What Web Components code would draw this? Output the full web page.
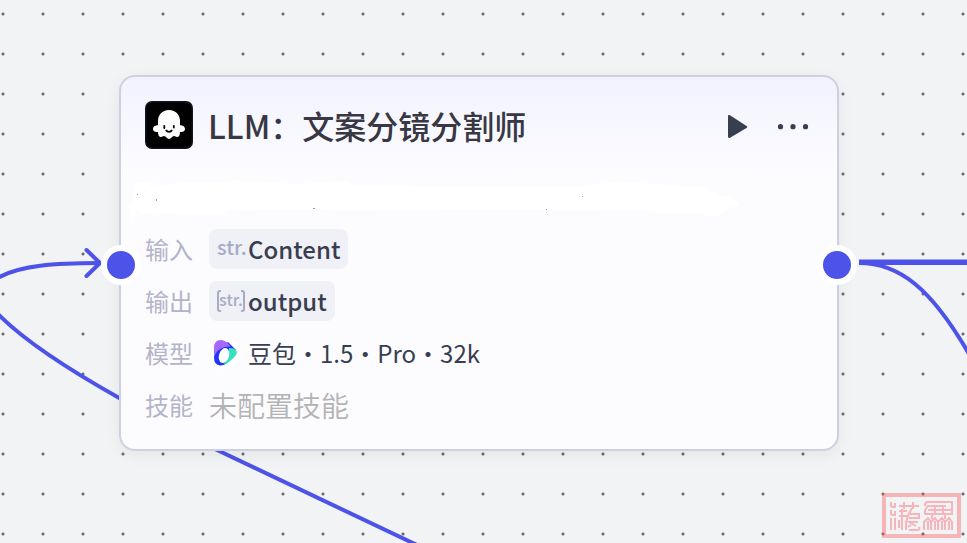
<!DOCTYPE html>
<html lang="zh-CN">
<head>
<meta charset="utf-8">
<title>LLM：文案分镜分割师</title>
<style>
  html, body {
    height: 100%;
    margin: 0;
  }
  body {
    font-family: "Noto Sans CJK SC", sans-serif;
    overflow: hidden;
  }
</style>
</head>
<body>
<flow-canvas>
  <flow-edges></flow-edges>
  <flow-node>
    <node-header slot="header">LLM：文案分镜分割师</node-header>
    <node-description slot="description"></node-description>
    <node-row label="输入"><variable-chip type="str.">Content</variable-chip></node-row>
    <node-row label="输出"><variable-chip type="str." list>output</variable-chip></node-row>
    <node-row label="模型"><model-name>豆包・1.5・Pro・32k</model-name></node-row>
    <node-row label="技能"><empty-value>未配置技能</empty-value></node-row>
  </flow-node>
  <seal-mark></seal-mark>
</flow-canvas>

<script>
"use strict";

function define(name, html) {
  window.customElements.define(name, class extends HTMLElement {
    constructor() {
      super();
      this.attachShadow({mode: 'open'}).innerHTML = html;
    }
  });
}

define('flow-canvas', `
  <style>
    :host {
      display: block;
      position: relative;
      min-height: 100%;
      overflow: hidden;
      background-color: #f1f3f5;
      background-image: radial-gradient(circle at 20px 20px, #6e6e6e 1px, transparent 2px);
      background-size: 40px 40px;
      background-position: -17px -6px;
    }
  </style>
  <slot></slot>
`);

define('flow-edges', `
  <style>
    svg {
      position: absolute;
      top: 0;
      fill: none;
      stroke: #4d53e8;
      stroke-width: 4;
      overflow: visible;
    }
    .in { left: 0; }
    .out { right: 0; }
  </style>
  <svg class="in" width="440" height="560" aria-hidden="true">
    <path d="M-4 279C18 265 58 263 99 263"/>
    <path d="M86.500 250L100 263L86.500 276" stroke-linecap="round" stroke-linejoin="round"/>
    <path d="M-3 313C24 341 71 371 121 399M215 449L417 545"/>
  </svg>
  <svg class="out" width="128" height="560" aria-hidden="true">
    <path d="M20 262.300H128" stroke-width="5.500"/>
    <path d="M20 263C60 263 92 288 130 354"/>
  </svg>
`);

define('flow-node', `
  <style>
    :host {
      display: block;
      position: absolute;
      top: 75px;
      left: 119px;
      right: 128px;
      box-sizing: border-box;
      padding: 24px;
      border: 2px solid #cdd0e0;
      border-radius: 16px;
      background: linear-gradient(#f2f2ff, #fcfcff 96px);
      box-shadow: 0 4px 16px rgba(0, 0, 0, 0.06);
    }
    .rows {
      display: flex;
      flex-direction: column;
      gap: 12px;
    }
    .port {
      position: absolute;
      top: 168px;
      box-sizing: border-box;
      width: 40px;
      height: 40px;
      border: 6px solid #fff;
      border-radius: 50%;
      background: #4d53e8;
    }
    .port--in { left: -20px; }
    .port--out { right: -20px; }
  </style>
  <slot name="header"></slot>
  <slot name="description"></slot>
  <div class="rows"><slot></slot></div>
  <div class="port port--in"></div>
  <div class="port port--out"></div>
`);

define('node-header', `
  <style>
    :host {
      display: flex;
      align-items: center;
      height: 48px;
    }
    .icon {
      width: 48px;
      height: 48px;
      margin-right: 15px;
    }
    h1 {
      flex: 1;
      margin: 0;
      font-size: 32px;
      font-weight: 500;
      line-height: 48px;
      color: #383743;
      white-space: nowrap;
    }
    button {
      display: flex;
      padding: 4px;
      border: 0;
      background: none;
      color: #383e50;
      fill: currentColor;
    }
    button + button { margin-left: 20px; }
  </style>
  <svg class="icon" viewBox="0 0 48 48" aria-hidden="true">
    <rect width="48" height="48" rx="7" fill="#101522"/>
    <rect x="1.500" y="1.500" width="45" height="45" rx="6" fill="#000"/>
    <path fill="#fff" d="M24 9c-7 0-11 5-11 11v4c-2 .5-5 1-5 4 0 2.500 2.500 3 5 3 0 3 1 5 3 5 1 0 2-1 3-1 2 0 3 3 5 3s3-3 5-3c1 0 2 1 3 1 2 0 3-2 3-5 2.500 0 5-.5 5-3 0-3-3-3.500-5-4v-4c0-6-4-11-11-11z"/>
    <path fill="none" stroke="#000" stroke-width="1.800" stroke-linecap="round" d="M19.300 25v2M28.800 25v1.500M21.300 29.500c1 1.700 4.400 1.700 5.400 0"/>
  </svg>
  <h1><slot></slot></h1>
  <button type="button" aria-label="运行">
    <svg width="24" height="28"><path d="M3 5.500C3 4 4 3.800 5 4.300L21.500 15c1 .7 1 1.500 0 2L5 26.700C4 27.200 3 27 3 25.500z"/></svg>
  </button>
  <button type="button" aria-label="更多">
    <svg width="32" height="28"><circle cx="3.500" cy="15.700" r="2.600"/><circle cx="16" cy="15.700" r="2.600"/><circle cx="28.500" cy="15.700" r="2.600"/></svg>
  </button>
`);

// description is brushed over in white, with a few specks left uncovered
define('node-description', `
  <style>
    :host { display: block; }
    svg {
      display: block;
      width: 100%;
      height: 80px;
      overflow: visible;
    }
  </style>
  <svg viewBox="0 0 668 80" preserveAspectRatio="xMinYMin slice" aria-hidden="true">
    <path fill="#fff" d="M-24 57L-13 55L-11 36L-8 34H5V37L13 36V31L15 37L37 34H75L90 31L112 33L150 35L190 33H204V36L285 37L330 38H425L445 36L470 33L512 35L535 37H557L563 43L573 44V47L588 48V51L593 53V57L584 58Q577 68 566 67L551 64Q520 67 506 62L440 61L300 60L285 62L130 60L80 62V66L14 65L10 68L5 63L-3 66L-8 62L-14 71V58z"/>
    <path fill="#8f9dac" d="M-8 45h1v1h-1zM11 50h1v2h-1zM168 59h2v1h-2zM401 60h1v1h-1zM437 47h1v1h-1z"/>
  </svg>
`);

window.customElements.define('node-row', class extends HTMLElement {
  constructor() {
    super();
    this.attachShadow({mode: 'open'}).innerHTML = `
      <style>
        :host {
          display: flex;
          align-items: center;
          gap: 16px;
          height: 40px;
        }
        .label {
          width: 48px;
          font-size: 24px;
          line-height: 40px;
          color: #b3b4c8;
          white-space: nowrap;
        }
      </style>
      <span class="label"></span>
      <slot></slot>
    `;
    this.shadowRoot.querySelector('.label').textContent = this.getAttribute('label');
  }
});

window.customElements.define('variable-chip', class extends HTMLElement {
  constructor() {
    super();
    this.attachShadow({mode: 'open'}).innerHTML = `
      <style>
        :host {
          display: flex;
          align-items: center;
          height: 40px;
          padding: 0 8px;
          border-radius: 8px;
          background: #f0f0f7;
          font-size: 24px;
          font-weight: 500;
          line-height: 40px;
          color: #383e50;
        }
        .type {
          position: relative;
          width: 28px;
          height: 40px;
          margin-right: 3px;
          font-size: 20px;
          line-height: 36px;
          text-align: center;
          color: #a7abc6;
          white-space: nowrap;
        }
        :host([list]) .type { font-size: 16px; }
        svg { display: none; }
        :host([list]) svg {
          display: block;
          position: absolute;
          top: 9px;
          left: 0;
          fill: none;
          stroke: currentColor;
          stroke-width: 2;
        }
      </style>
      <span class="type"><span class="name"></span><svg width="28" height="22" aria-hidden="true"><path d="M4 1H3Q1 1 1 3V19Q1 21 3 21H4M24 1H25Q27 1 27 3V19Q27 21 25 21H24"/></svg></span>
      <slot></slot>
    `;
    this.shadowRoot.querySelector('.name').textContent = this.getAttribute('type');
  }
});

define('model-name', `
  <style>
    :host {
      display: flex;
      align-items: center;
      gap: 7px;
      font-size: 24px;
      line-height: 40px;
      color: #383e50;
      white-space: nowrap;
    }
  </style>
  <svg width="32" height="32" viewBox="0 0 32 32" aria-hidden="true">
    <circle cx="16" cy="16" r="16" fill="#fff"/>
    <path fill="#1f35fa" d="M5 20Q6 13 12 10L19 5L27 13L20 24Q16 28.500 11 28.500Q5 28 5 20z"/>
    <path fill="#a569ff" d="M5 19V11Q5 3 12 3Q17 3 21.500 9.500Q11 9 6.500 17z"/>
    <path fill="#37e1be" d="M20 11Q25 10.500 27.500 14Q28.500 16 27 18Q22 25 14.500 27.500Q19 22 20 11z"/>
    <ellipse cx="15" cy="18.500" rx="5" ry="7.600" fill="#fff" transform="rotate(18 15 18.500)"/>
  </svg>
  <span><slot></slot></span>
`);

define('empty-value', `
  <style>
    :host {
      font-family: "Noto Sans CJK SC DemiLight", "Noto Sans CJK SC", sans-serif;
      font-size: 28px;
      font-weight: 350;
      line-height: 40px;
      color: #b3b3b5;
      white-space: nowrap;
    }
  </style>
  <slot></slot>
`);

define('seal-mark', `
  <style>
    :host {
      position: absolute;
      right: 6px;
      bottom: 5px;
    }
    svg { display: block; }
  </style>
  <svg width="79" height="45" viewBox="0 0 79 45" fill="none" aria-hidden="true">
    <g stroke="#ff5a5f" opacity=".4">
      <path stroke-width="4" d="M2 2H77V43H2z"/>
      <path stroke-width="2" d="M9 9V13Q9 14 13 14V10M9 17V21Q9 22 13 22V18M9 25V37M13 25V37M17 13H37M22 9V16M31 9V16M17 18H25M20 16V37M17 23H26L24 29V37M17 27V35M30 15L27 21H37V25H27M36 29H27L34 33M27 37H36Q38 37 37 34M29 32L26 34"/>
      <path stroke-width="2" d="M43 13V12Q43 9 46 9H70V21H43V17L46 13H64M46 17H70M53 13V21M61 13V21M42 37V29L46 25L49 29V37M49 29L53 25L56 29V37M56 29L60 25L63 29V37M63 29L67 25L70 29V37M46 28V37M53 28V37M60 28V37M67 28V37M50 21V26M63 21V26"/>
    </g>
  </svg>
`);
</script>
</body>
</html>
